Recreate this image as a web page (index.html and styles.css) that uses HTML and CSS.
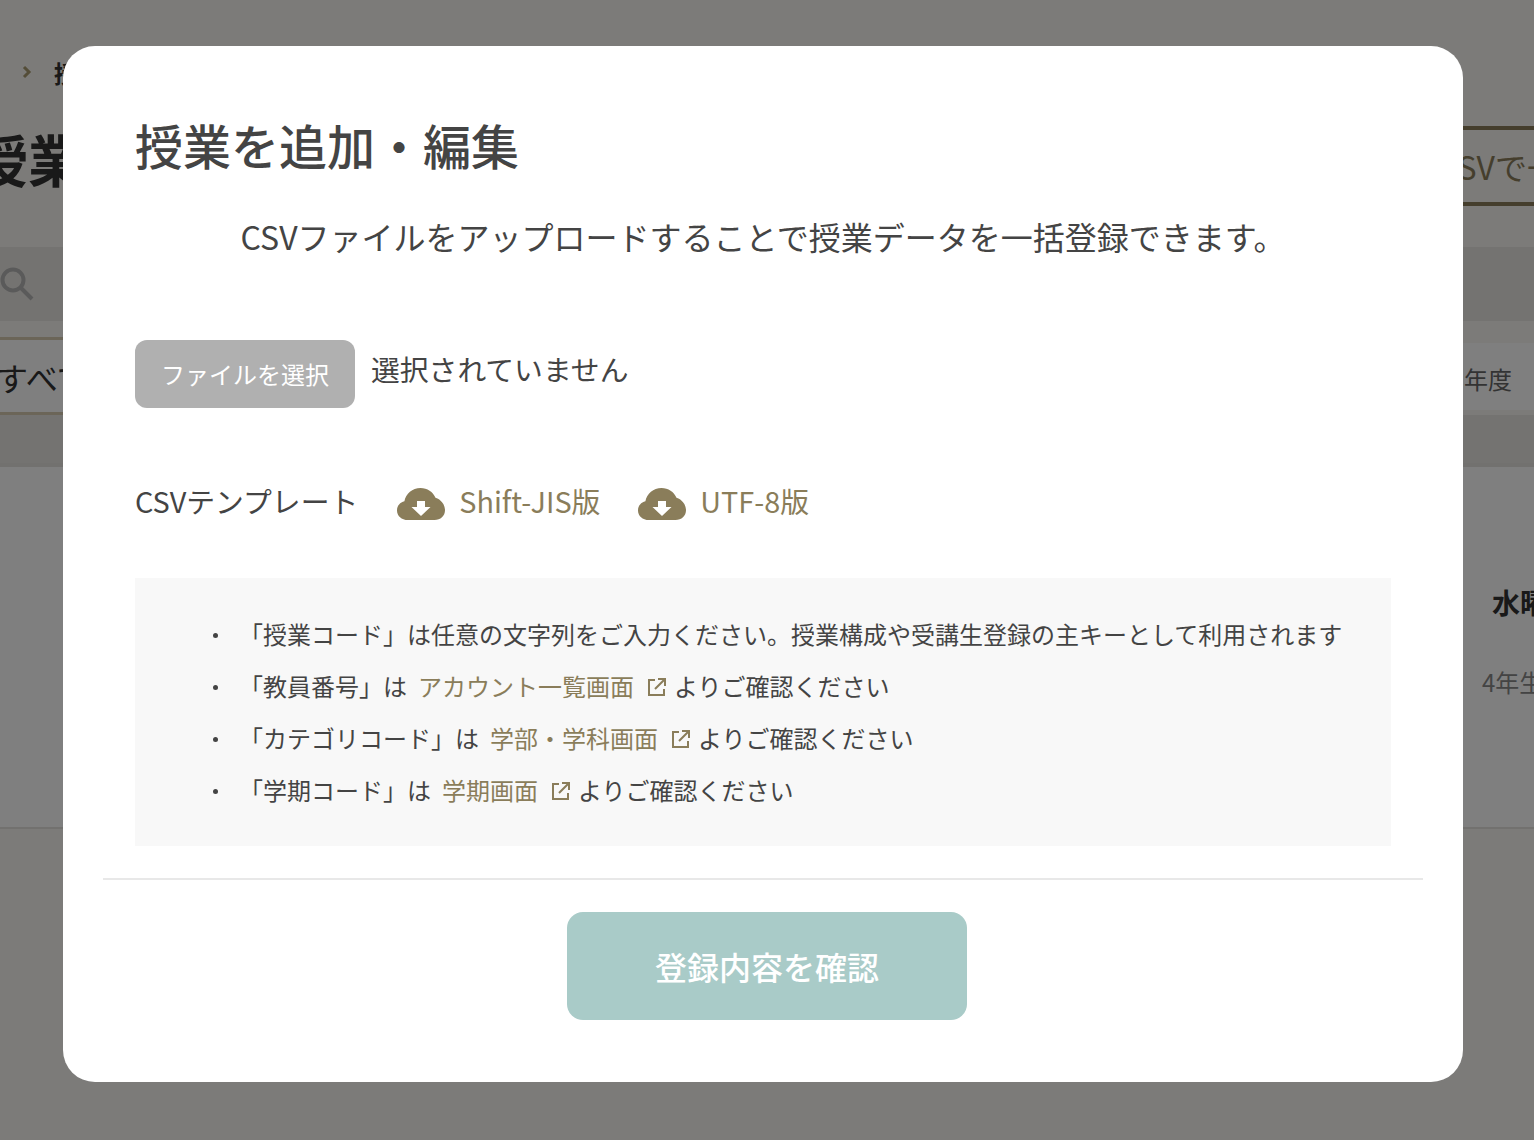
FILE: index.html
```html
<!DOCTYPE html>
<html lang="ja">
<head>
    <meta charset="UTF-8">
    <title>授業を追加・編集</title>
    <link rel="stylesheet" href="styles.css">
</head>
<body>
    <!-- page behind the dialog -->
    <div class="page">
        <div class="breadcrumb">
            <svg class="chevron" viewBox="0 0 10 14"><path d="M2 2l5 5-5 5" fill="none" stroke="#a89a70" stroke-width="3"/></svg>
            <span>授業一覧</span>
        </div>
        <div class="page-head">
            <h1>授業一覧</h1>
            <a class="csv-btn">CSVで一括登録</a>
        </div>
        <div class="search-band">
            <svg class="search-icon" viewBox="0 0 34 34"><circle cx="13" cy="13" r="10.5" fill="none" stroke="#b4b4b4" stroke-width="4"/><path d="M21 21l11 11" stroke="#b4b4b4" stroke-width="4"/></svg>
        </div>
        <div class="filter-row">
            <div class="filter-tab">すべて</div>
            <div class="year-tab">年度</div>
        </div>
        <div class="list-band"></div>
        <div class="list-card">
            <div class="card-side">
                <div class="card-day">水曜日</div>
                <div class="card-grade">4年生</div>
            </div>
        </div>
    </div>

    <div class="overlay"></div>

    <div class="modal">
        <h2>授業を追加・編集</h2>
        <p class="lead">CSVファイルをアップロードすることで授業データを一括登録できます。</p>

        <div class="file-row">
            <button class="file-btn">ファイルを選択</button>
            <span class="file-name">選択されていません</span>
        </div>

        <div class="template-row">
            <span class="template-label">CSVテンプレート</span>
            <a class="download">
                <svg class="cloud" viewBox="0 0 48 32"><use href="#cloud-icon"/></svg>
                Shift-JIS版
            </a>
            <a class="download">
                <svg class="cloud" viewBox="0 0 48 32"><use href="#cloud-icon"/></svg>
                UTF-8版
            </a>
        </div>

        <ul class="notes">
            <li>「授業コード」は任意の文字列をご入力ください。授業構成や受講生登録の主キーとして利用されます</li>
            <li>「教員番号」は<a class="note-link">アカウント一覧画面<svg class="ext" viewBox="0 0 20 20"><use href="#ext-icon"/></svg></a>よりご確認ください</li>
            <li>「カテゴリコード」は<a class="note-link">学部・学科画面<svg class="ext" viewBox="0 0 20 20"><use href="#ext-icon"/></svg></a>よりご確認ください</li>
            <li>「学期コード」は<a class="note-link">学期画面<svg class="ext" viewBox="0 0 20 20"><use href="#ext-icon"/></svg></a>よりご確認ください</li>
        </ul>

        <div class="modal-foot">
            <button class="submit-btn">登録内容を確認</button>
        </div>
    </div>

    <svg class="icon-defs" width="0" height="0">
        <symbol id="cloud-icon" viewBox="0 0 48 32">
            <path fill="#8a7d5a" d="M11 32C4.500 32 0 27.800 0 22.400c0-4.500 3-8 7.400-9.100C8.800 5.600 15.400 0 23.500 0c6.800 0 12.500 3.900 15 9.800C44 11.600 48 16.500 48 22.200 48 27.800 43.500 32 37.500 32z"/>
            <path fill="#fff" d="M20 13h8v6h5.500L24 28l-9.500-9H20z"/>
        </symbol>
        <symbol id="ext-icon" viewBox="0 0 20 20">
            <path fill="none" stroke="#8a7d5a" stroke-width="2" d="M8 3H2v15h15v-6M11 2h7v7M18 2L8 12"/>
        </symbol>
    </svg>
</body>
</html>
```

FILE: styles.css
```css
* {
    box-sizing: border-box;
}
html, body {
    height: 100%;
}
body {
    margin: 0;
    overflow: hidden;
    background: #f8f6f2;
    color: #333;
    font-family: "Noto Sans CJK JP", "Noto Sans", sans-serif;
}

/* page behind the dialog */
.page {
    width: 1534px;
    height: 1140px;
    overflow: hidden;
}
.breadcrumb {
    display: flex;
    align-items: center;
    height: 126px;
    padding: 18px 0 0 22px;
    gap: 22px;
    font-size: 24px;
    font-weight: 700;
    color: #333;
}
.chevron {
    width: 10px;
    height: 14px;
}
.page-head {
    display: flex;
    justify-content: space-between;
    height: 121px;
}
.page-head h1 {
    margin: -3px 0 0 -28px;
    font-size: 56px;
    line-height: 70px;
    font-weight: 700;
    color: #333;
}
.csv-btn {
    width: 300px;
    height: 80px;
    margin-right: -200px;
    padding-left: 4px;
    border-top: 4px solid #8a7d5a;
    border-bottom: 4px solid #8a7d5a;
    font-size: 32px;
    line-height: 72px;
    color: #8a7d5a;
    white-space: nowrap;
}
.search-band {
    height: 74px;
    background: #e9e7e3;
    display: flex;
    align-items: center;
}
.search-icon {
    width: 34px;
    height: 34px;
}
.filter-row {
    display: flex;
    justify-content: space-between;
    align-items: flex-end;
    height: 94px;
}
.filter-tab {
    width: 200px;
    height: 78px;
    margin-left: -4px;
    border-top: 3px solid #d6cbb0;
    border-bottom: 3px solid #d6cbb0;
    background: #fff;
    font-size: 32px;
    line-height: 74px;
}
.year-tab {
    width: 240px;
    height: 67px;
    margin-bottom: 5px;
    padding-left: 170px;
    background: #fff;
    font-size: 24px;
    line-height: 71px;
    color: #666;
}
.list-band {
    height: 48px;
    background: #e9e7e3;
}
.list-card {
    height: 366px;
    background: #fff;
    border-top: 4px solid #e4e2de;
    border-bottom: 2px solid #e4e2de;
    display: flex;
    justify-content: flex-end;
}
.card-side {
    width: 52px;
    white-space: nowrap;
    padding-top: 115px;
}
.card-day {
    margin-left: 10px;
    font-size: 28px;
    font-weight: 700;
    line-height: 40px;
}
.card-grade {
    margin-top: 42px;
    font-size: 24px;
    line-height: 36px;
    color: #888;
}

.overlay {
    position: fixed;
    inset: 0;
    background: rgba(0, 0, 0, 0.5);
}

/* dialog */
.modal {
    position: fixed;
    top: 46px;
    left: 63px;
    width: 1400px;
    height: 1036px;
    padding: 62px 72px 0;
    background: #fff;
    border-radius: 32px;
    color: #444;
}
.modal h2 {
    margin: 0;
    font-size: 48px;
    line-height: 72px;
    font-weight: 500;
}
.lead {
    margin: 32px 0 0;
    font-size: 32px;
    line-height: 48px;
    text-align: center;
}
.file-row {
    display: flex;
    align-items: flex-start;
    margin-top: 80px;
    gap: 16px;
}
.file-btn {
    width: 220px;
    height: 68px;
    padding: 0 0 2px;
    border: none;
    border-radius: 12px;
    background: #b0b0b0;
    color: #fff;
    font: inherit;
    font-size: 24px;
}
.file-name {
    font-size: 28.8px;
    line-height: 58px;
}
.template-row {
    display: flex;
    align-items: center;
    margin-top: 67px;
    height: 50px;
    font-size: 28.8px;
}
.template-label {
    margin-right: 39px;
}
.download {
    display: flex;
    align-items: center;
    gap: 14px;
    margin-right: 38px;
    color: #8a7d5a;
}
.cloud {
    width: 48px;
    height: 32px;
    margin-top: 7px;
}
.notes {
    list-style: none;
    margin: 53px 0 0;
    height: 268px;
    padding: 30px 0 0 104px;
    background: #f8f8f8;
    font-size: 24px;
    line-height: 52px;
}
.notes li::before {
    content: "";
    display: inline-block;
    width: 5px;
    height: 5px;
    margin: 0 21px 0 -26px;
    border-radius: 50%;
    background: #444;
    vertical-align: 6px;
}
.note-link {
    margin: 0 7px 0 11px;
    color: #8a7d5a;
}
.ext {
    width: 20px;
    height: 20px;
    margin-left: 13px;
    vertical-align: -1px;
}
.modal-foot {
    margin: 32px -32px 0;
    padding: 32px 0 0 8px;
    border-top: 2px solid #e8e8e8;
    display: flex;
    justify-content: center;
}
.submit-btn {
    width: 400px;
    height: 108px;
    border: none;
    border-radius: 16px;
    background: #a9cbc8;
    color: #fff;
    font: inherit;
    font-size: 32px;
    font-weight: 500;
}
.icon-defs {
    position: absolute;
}
```
